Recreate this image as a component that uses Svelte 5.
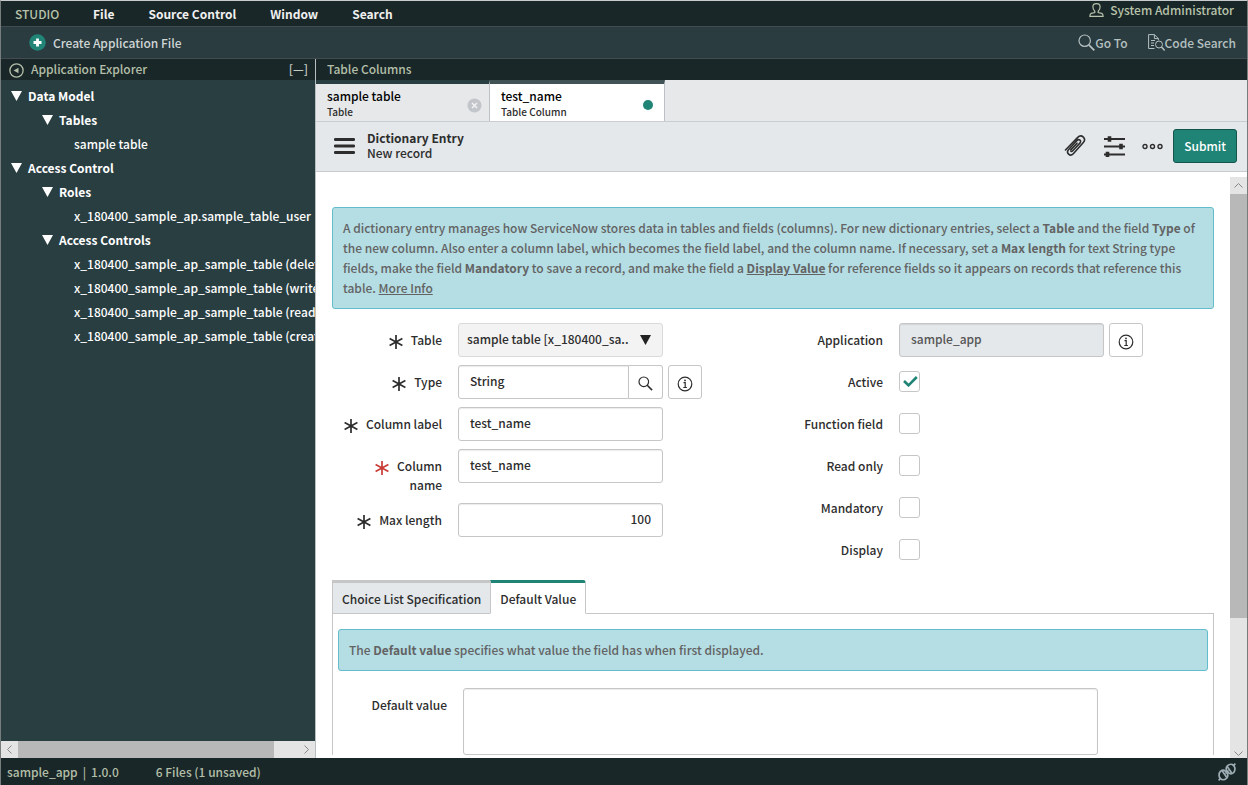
<script lang="ts">
  type Field = { id: string; label: string };

  const menus = ['File', 'Source Control', 'Window', 'Search'];

  // Application explorer tree, flattened
  const tree = [
    { label: 'Data Model', level: 0 },
    { label: 'Tables', level: 1 },
    { label: 'sample table', level: 2 },
    { label: 'Access Control', level: 0 },
    { label: 'Roles', level: 1 },
    { label: 'x_180400_sample_ap.sample_table_user', level: 2 },
    { label: 'Access Controls', level: 1 },
    { label: 'x_180400_sample_ap_sample_table (delete)', level: 2 },
    { label: 'x_180400_sample_ap_sample_table (write)', level: 2 },
    { label: 'x_180400_sample_ap_sample_table (read)', level: 2 },
    { label: 'x_180400_sample_ap_sample_table (create)', level: 2 }
  ];

  const flags: Field[] = [
    { id: 'active', label: 'Active' },
    { id: 'function_field', label: 'Function field' },
    { id: 'read_only', label: 'Read only' },
    { id: 'mandatory', label: 'Mandatory' },
    { id: 'display', label: 'Display' }
  ];

  // Record state
  let type = $state('String');
  let columnLabel = $state('test_name');
  let columnName = $state('test_name');
  let maxLength = $state('100');
  let defaultValue = $state('');
  let checked = $state<Record<string, boolean>>({ active: true });
  let section = $state('Default Value');
</script>

{#snippet mark(changed: boolean)}
  <svg class="mark" class:changed width="14" height="14" viewBox="0 0 14 14" fill="none" stroke="currentColor" stroke-width="1.7">
    <path d="M7 0v14M.6 3.6l12.8 6.8M13.4 3.6L.6 10.4" />
  </svg>
{/snippet}

{#snippet info()}
  <svg width="16" height="16" viewBox="0 0 16 16" fill="none" stroke="currentColor">
    <circle cx="8" cy="8" r="6.8" stroke-width="1.2" />
    <path d="M6.5 6.7h1.7v4.6M6.3 11.5h3.6" stroke-width="1.2" />
    <circle cx="8" cy="4.4" r=".9" fill="currentColor" stroke="none" />
  </svg>
{/snippet}

<div class="studio">
  <!-- Menu bar -->
  <header class="menubar">
    <span class="brand">STUDIO</span>
    <nav>
      {#each menus as menu}
        <button>{menu}</button>
      {/each}
    </nav>
    <button class="user">
      <svg width="15" height="14" viewBox="0 0 15 14" fill="none" stroke="currentColor" stroke-width="1.2">
        <path d="M5.8 8.2C4.3 6.8 3.8 5.2 3.9 3.6 4 1.7 5.5.7 7.5.7s3.5 1 3.600 2.900c.1 1.600-.4 3.200-1.900 4.600v1.300l3.600.9c.9.3 1.300 1 1.300 2.900H.9c0-1.900.4-2.600 1.300-2.900l3.600-.9z" />
      </svg>
      System Administrator
    </button>
  </header>

  <!-- Toolbar -->
  <div class="toolbar">
    <button class="create">
      <svg width="17" height="17" viewBox="0 0 17 17">
        <circle cx="8.5" cy="8.5" r="8.3" fill="#208577" />
        <path d="M8.5 4.5v8M4.5 8.5h8" stroke="#fff" stroke-width="2.8" />
      </svg>
      Create Application File
    </button>
    <button class="tool">
      <svg width="17" height="17" viewBox="0 0 17 17" fill="none" stroke="currentColor" stroke-width="1.2">
        <circle cx="6.7" cy="6.7" r="5.7" />
        <path d="M10.8 10.8l5.5 5.5" stroke-width="1.8" />
      </svg>
      Go To
    </button>
    <button class="tool">
      <svg width="17" height="17" viewBox="0 0 17 17" fill="none" stroke="currentColor">
        <path d="M6.5 14.5H.6V.6h5.8l4 4v1.6M6.4.6v4h4M3 6.5h4M3 9h3M3 11.5h3" />
        <circle cx="11" cy="10.5" r="3.5" />
        <path d="M13.5 13l3.2 3.5" stroke-width="1.5" />
      </svg>
      Code Search
    </button>
  </div>

  <div class="workspace">
    <!-- Application explorer -->
    <aside class="explorer">
      <div class="pane-title">
        <button class="collapse" aria-label="Collapse explorer">
          <svg width="15" height="15" viewBox="0 0 15 15" fill="none" stroke="currentColor">
            <circle cx="7.5" cy="7.5" r="6.6" stroke-width="1.3" />
            <path d="M9.5 4.7v5.6L4.5 7.5z" fill="currentColor" stroke="none" />
          </svg>
        </button>
        <span>Application Explorer</span>
        <button class="fold" aria-label="Collapse all">[—]</button>
      </div>
      <ul class="tree">
        {#each tree as node}
          <li class="level-{node.level}">
            {#if node.level < 2}
              <svg width="11" height="10" viewBox="0 0 11 10" fill="#fff"><path d="M0 0h11L5.5 10z" /></svg>
            {/if}
            {node.label}
          </li>
        {/each}
      </ul>
      <div class="scroll-x">
        <svg width="17" height="17" viewBox="0 0 17 17" fill="none" stroke="#888"><path d="M10.5 4.5l-4 4 4 4" /></svg>
        <div class="thumb"></div>
        <svg width="17" height="17" viewBox="0 0 17 17" fill="none" stroke="#888"><path d="M6.5 4.5l4 4-4 4" /></svg>
      </div>
    </aside>

    <main class="editor">
      <div class="pane-title">Table Columns</div>

      <!-- Open files -->
      <div class="file-tabs">
        <div class="file-tab">
          <span class="file-name">sample table</span>
          <span class="file-type">Table</span>
          <button class="close" aria-label="Close sample table">
            <svg width="15" height="15" viewBox="0 0 15 15">
              <circle cx="7.5" cy="7.5" r="7" fill="#c2c5ca" />
              <path d="M5 5l5 5M10 5l-5 5" stroke="#f2f2f4" stroke-width="1.5" />
            </svg>
          </button>
        </div>
        <div class="file-tab current">
          <span class="file-name">test_name</span>
          <span class="file-type">Table Column</span>
          <span class="unsaved"></span>
        </div>
      </div>

      <!-- Record header -->
      <div class="record-bar">
        <button aria-label="Menu">
          <svg width="21" height="16" viewBox="0 0 21 16" stroke="currentColor" stroke-width="2.8" stroke-linecap="round"><path d="M1.3 1.5h18.4M1.3 8h18.4M1.3 14.5h18.4" /></svg>
        </button>
        <h1>Dictionary Entry<small>New record</small></h1>
        <button aria-label="Attachments">
          <svg width="22" height="22" viewBox="0 0 22 22" fill="none" stroke="currentColor" stroke-width="1.6" stroke-linecap="round" stroke-linejoin="round">
            <path d="M1.5 15L13.5 2.600c2-2 4.300-1.900 5.800-.5s1.600 3.700-.2 5.700L9.300 18.700c-1.500 1.600-3.400 1.700-4.700.5s-1.300-3.100.1-4.700L13 5.500c1-1.100 2.200-1 3-.3s.8 1.900-.1 2.900L8.500 16c-.5.6-1.100.6-1.600.2" />
            <path d="M6.800 14.900L13 8.200" />
          </svg>
        </button>
        <button aria-label="Personalize form">
          <svg width="22" height="22" viewBox="0 0 22 22" fill="none" stroke="currentColor" stroke-width="1.8">
            <path d="M1 4h21M1 11.500h21M1 19.500h21" />
            <path d="M6.500 1.200v5.600M18 8.700v5.600M4.500 16.700v5.300" stroke-width="3.600" />
          </svg>
        </button>
        <button aria-label="More options">
          <svg class="dots" width="21" height="7" viewBox="0 0 21 7" fill="none" stroke="currentColor" stroke-width="1.4">
            <circle cx="3" cy="3.500" r="2" /><circle cx="10.500" cy="3.500" r="2" /><circle cx="18" cy="3.500" r="2" />
          </svg>
        </button>
        <button class="submit">Submit</button>
      </div>

      <div class="scroll-area">
        <form class="record">
          <div class="message">
            A dictionary entry manages how ServiceNow stores data in tables and fields (columns). For new dictionary
            entries, select a <b>Table</b> and the field <b>Type</b> of the new column. Also enter a column label, which
            becomes the field label, and the column name. If necessary, set a <b>Max length</b> for text String type
            fields, make the field <b>Mandatory</b> to save a record, and make the field a
            <a href="#display"><b>Display Value</b></a> for reference fields so it appears on records that reference
            this table. <a href="#more">More Info</a>
          </div>

          <div class="columns">
            <div class="column">
              <div class="row">
                <label for="table">{@render mark(false)}<span>Table</span></label>
                <div class="select">
                  <select id="table">
                    <option>sample table [x_180400_sa..</option>
                  </select>
                  <svg width="11" height="10" viewBox="0 0 11 10" fill="#222"><path d="M0 0h11L5.5 10z" /></svg>
                </div>
              </div>
              <div class="row">
                <label for="type">{@render mark(false)}<span>Type</span></label>
                <div class="lookup">
                  <input id="type" type="text" bind:value={type} />
                  <button type="button" aria-label="Look up type">
                    <svg width="15" height="15" viewBox="0 0 15 15" fill="none" stroke="currentColor" stroke-width="1.2">
                      <circle cx="5.8" cy="5.8" r="4.8" />
                      <path d="M9.2 9.2l4.900 4.900" stroke-width="1.6" />
                    </svg>
                  </button>
                </div>
                <button class="info" type="button" aria-label="Preview type">{@render info()}</button>
              </div>
              <div class="row">
                <label for="column_label">{@render mark(false)}<span>Column label</span></label>
                <input id="column_label" type="text" bind:value={columnLabel} />
              </div>
              <div class="row">
                <label for="column_name">{@render mark(true)}<span>Column<br />name</span></label>
                <input id="column_name" type="text" bind:value={columnName} />
              </div>
              <div class="row">
                <label for="max_length">{@render mark(false)}<span>Max length</span></label>
                <input id="max_length" class="number" type="text" bind:value={maxLength} />
              </div>
            </div>

            <div class="column">
              <div class="row">
                <label for="application"><span>Application</span></label>
                <input id="application" type="text" value="sample_app" readonly />
                <button class="info" type="button" aria-label="Preview application">{@render info()}</button>
              </div>
              {#each flags as flag}
                <div class="row">
                  <label for={flag.id}><span>{flag.label}</span></label>
                  <span class="check">
                    <input id={flag.id} type="checkbox" bind:checked={checked[flag.id]} />
                    {#if checked[flag.id]}
                      <svg width="15" height="11" viewBox="0 0 15 11" fill="none" stroke="#1f8476" stroke-width="2.6"><path d="M1 5l4.500 4.300L13.8 1" /></svg>
                    {/if}
                  </span>
                </div>
              {/each}
            </div>
          </div>

          <!-- Sections -->
          <div class="section-tabs">
            {#each ['Choice List Specification', 'Default Value'] as name}
              <button type="button" class:selected={section === name} onclick={() => (section = name)}>{name}</button>
            {/each}
          </div>
          <div class="section">
            <div class="message">The <b>Default value</b> specifies what value the field has when first displayed.</div>
            <div class="row">
              <label for="default_value"><span>Default value</span></label>
              <textarea id="default_value" bind:value={defaultValue}></textarea>
            </div>
          </div>
        </form>

        <div class="scroll-y">
          <svg width="17" height="17" viewBox="0 0 17 17" fill="none" stroke="#888"><path d="M4.5 10.5l4-4 4 4" /></svg>
          <div class="thumb"></div>
          <svg width="17" height="17" viewBox="0 0 17 17" fill="none" stroke="#888"><path d="M4.5 10.5l4 4 4-4" /></svg>
        </div>
      </div>
    </main>
  </div>

  <!-- Status bar -->
  <footer class="statusbar">
    <span class="version"><span>sample_app</span><span>|</span><span>1.0.0</span></span>
    <span>6 Files (1 unsaved)</span>
    <svg width="18" height="18" viewBox="0 0 18 18" fill="none" stroke="currentColor" stroke-width="1.7">
      <path d="M.6 17.4l2.400-2.400M17.4.6l-2.400 2.400" />
      <path d="M2.4 8.400c2.300-1.800 4.600-1 6 .6s2 4.200 0 6.400c-2 1.800-4.600 1.700-6 .2s-2.200-4.800 0-7.200z" />
      <path d="M15.600 9.600c-2.300 1.800-4.600 1-6-.6s-2-4.200 0-6.400c2-1.800 4.600-1.700 6-.2s2.200 4.800 0 7.200z" />
      <path d="M4.300 8l4.500 6.500M13.700 10L9.200 3.500M7.500 10.500l3-3" />
    </svg>
  </footer>
</div>

<style>
  :global(body) {
    font-family: 'Noto Sans CJK SC', 'Liberation Sans', sans-serif;
    font-size: 12px;
    font-weight: 500;
    line-height: 20px;
    color: #2d2d2d;
    background: #fff;
  }

  .studio,
  .studio * {
    box-sizing: border-box;
  }

  .studio {
    height: 100vh;
    display: flex;
    flex-direction: column;
    overflow: hidden;
    border: solid #777c7d;
    border-width: 1px 1px 0;
    border-top-color: #c9cccc;
  }

  button,
  input,
  select,
  textarea {
    font: inherit;
    color: inherit;
  }

  button {
    display: flex;
    align-items: center;
    padding: 0;
    background: none;
    border: 0;
    white-space: nowrap;
    cursor: pointer;
  }

  svg {
    display: block;
    flex: none;
  }

  /* Menu bar */
  .menubar {
    display: flex;
    align-items: center;
    height: 26px;
    padding: 0 13px 0 14px;
    background: #1a2728;
    border-bottom: 1px solid #414b50;
    color: #f0f0f0;
    flex: none;
  }

  .brand {
    width: 78px;
    color: #b8c3ab;
  }

  nav {
    display: flex;
    gap: 34px;
    flex: 1;
    font-weight: 700;
  }

  .user {
    gap: 6px;
    height: 20px;
    margin-bottom: 8px;
    color: #b8c3ab;
  }

  /* Toolbar */
  .toolbar {
    display: flex;
    align-items: center;
    gap: 20px;
    height: 32px;
    padding: 0 11px 0 28px;
    background: #2a3c40;
    border-bottom: 1px solid #414b50;
    color: #b5c0c0;
    flex: none;
  }

  .create {
    gap: 7px;
    margin-right: auto;
    color: #cfd5d5;
  }

  /* Panes */
  .workspace {
    display: flex;
    flex: 1;
    min-height: 0;
  }

  .pane-title {
    display: flex;
    align-items: center;
    height: 21px;
    padding: 0 11px 2px;
    background: #1a2728;
    color: #b3bfa9;
    flex: none;
  }

  .explorer {
    width: 315px;
    display: flex;
    flex-direction: column;
    background: #293e41;
    border-right: 1px solid #b9bec3;
    flex: none;
  }

  .explorer .pane-title {
    gap: 7px;
    padding: 0 7px 2px 8px;
  }

  .collapse {
    margin-top: 4px;
  }

  .fold {
    margin-left: auto;
    color: #c5cbc5;
  }

  .tree {
    flex: 1;
    margin: 0;
    padding: 4px 0;
    list-style: none;
    overflow: hidden;
    color: #fff;
  }

  .tree li {
    display: flex;
    align-items: center;
    gap: 6px;
    height: 24px;
    white-space: nowrap;
  }

  .tree .level-0 {
    padding-left: 10px;
    font-weight: 700;
  }

  .tree .level-1 {
    padding-left: 41px;
    font-weight: 700;
  }

  .tree .level-2 {
    padding-left: 73px;
  }

  .scroll-x {
    display: flex;
    height: 17px;
    background: #e4e4e4;
    flex: none;
  }

  .scroll-x .thumb {
    width: 256px;
    margin-right: auto;
    background: #b8b8b8;
  }

  .editor {
    display: flex;
    flex-direction: column;
    flex: 1;
    min-width: 0;
    background: #fff;
  }

  /* Open files */
  .file-tabs {
    display: flex;
    height: 42px;
    background: #e6e8ea;
    border-bottom: 1px solid #c9ccd1;
    flex: none;
  }

  .file-tab {
    position: relative;
    display: flex;
    flex-direction: column;
    width: 174px;
    padding: 3px 11px 0;
    border-top: 4px solid #293e41;
    border-right: 1px solid #bdc0c4;
  }

  .file-tab.current {
    width: 175px;
    background: #fff;
    border-top-color: #425356;
  }

  .file-name {
    line-height: 18px;
    color: #000;
  }

  .file-type {
    font-size: 10px;
    line-height: 13px;
  }

  .close,
  .unsaved {
    position: absolute;
    right: 7px;
    top: 14px;
  }

  .unsaved {
    right: 11px;
    top: 16px;
    width: 10px;
    height: 10px;
    border-radius: 50%;
    background: #1f8476;
  }

  /* Record header */
  .record-bar {
    display: flex;
    align-items: center;
    gap: 17px;
    height: 50px;
    padding: 0 10px 2px 18px;
    background: #e4e8eb;
    border-bottom: 1px solid #c8ccd0;
    flex: none;
  }

  h1 {
    display: flex;
    flex-direction: column;
    flex: 1;
    margin: 0 0 2px -5px;
    font-size: 12px;
    line-height: 15px;
    font-weight: 700;
  }

  h1 small {
    font-size: 12px;
    font-weight: 500;
  }

  .dots {
    margin-top: 2px;
  }

  .submit {
    margin-left: -7px;
    height: 34px;
    padding: 0 10px;
    background: #1f8476;
    border: 1px solid #12554c;
    border-radius: 3px;
    color: #fff;
  }

  /* Record */
  .scroll-area {
    display: flex;
    flex: 1;
    min-height: 0;
    overflow: hidden;
  }

  .record {
    flex: 1;
    min-width: 0;
    padding: 35px 16px 0;
  }

  .message {
    padding: 10px;
    background: #b4dde4;
    border: 1px solid #62bccb;
    border-radius: 3px;
    color: #636363;
  }

  .message a {
    color: inherit;
  }

  .columns {
    display: grid;
    grid-template-columns: 1fr 1fr;
    padding-top: 14px;
  }

  .column {
    display: flex;
    flex-direction: column;
    gap: 8px;
  }

  .row {
    display: flex;
    align-items: flex-start;
    min-height: 34px;
  }

  label {
    display: flex;
    justify-content: flex-end;
    gap: 8px;
    width: 110px;
    margin-right: 16px;
    padding: 7px 0 1px;
    text-align: right;
    line-height: 19px;
    white-space: nowrap;
    flex: none;
  }

  .mark {
    margin-top: 5px;
  }

  .mark.changed {
    color: #c83c36;
  }

  input[type='text'],
  select,
  textarea {
    width: 205px;
    height: 34px;
    margin: 0;
    padding: 0 11px 3px;
    background: #fff;
    border: 1px solid #c6c6c6;
    border-radius: 3px;
    outline: 0;
    box-shadow: inset 0 1px 1px rgba(0, 0, 0, 0.08);
  }

  input[type='text'][readonly] {
    background: #e4e8eb;
    color: #555;
  }

  .number {
    text-align: right;
  }

  .select {
    position: relative;
  }

  .select select {
    display: block;
    appearance: none;
    padding: 0 8px 2px;
    background: #f3f3f3;
    border-color: #dadada;
    box-shadow: none;
  }

  .select svg {
    position: absolute;
    right: 12px;
    top: 12px;
    pointer-events: none;
  }

  .lookup {
    display: flex;
    width: 205px;
  }

  .lookup input[type='text'] {
    flex: 1;
    min-width: 0;
    border-radius: 3px 0 0 3px;
  }

  .lookup button {
    width: 34px;
    height: 34px;
    justify-content: center;
    padding-top: 3px;
    border: 1px solid #c6c6c6;
    border-left: 0;
    border-radius: 0 3px 3px 0;
  }

  .info {
    width: 34px;
    height: 34px;
    margin-left: 5px;
    padding-top: 4px;
    justify-content: center;
    border: 1px solid #c6c6c6;
    border-radius: 3px;
  }

  .check {
    position: relative;
    width: 21px;
    height: 21px;
    margin-top: 6px;
  }

  .check input {
    display: block;
    appearance: none;
    width: 21px;
    height: 21px;
    margin: 0;
    background: #fff;
    border: 1px solid #c6c6c6;
    border-radius: 3px;
  }

  .check svg {
    position: absolute;
    left: 4px;
    top: 5px;
    pointer-events: none;
  }

  /* Sections */
  .section-tabs {
    display: flex;
    margin-top: 13px;
  }

  .section-tabs button {
    height: 34px;
    padding: 1px 9px 0;
    background: #e4e8eb;
    border: 1px solid #c6c6c6;
    border-top-width: 3px;
    border-right-width: 0;
    margin-bottom: -1px;
  }

  .section-tabs .selected {
    background: #fff;
    border-top-color: #1f8476;
    border-right-width: 1px;
    border-bottom-color: #fff;
    border-radius: 0 3px 0 0;
  }

  .section {
    padding: 15px 5px 0;
    border: 1px solid #c6c6c6;
    border-bottom: 0;
  }

  .section .row {
    padding-top: 17px;
  }

  .section label {
    width: 109px;
  }

  textarea {
    width: 73%;
    height: 67px;
    resize: none;
  }

  .scroll-y {
    display: flex;
    flex-direction: column;
    width: 17px;
    margin-top: 5px;
    background: #e4e4e4;
    flex: none;
  }

  .scroll-y .thumb {
    flex: 0 0 73%;
    margin-bottom: auto;
    background: #b8b8b8;
  }

  /* Status bar */
  .statusbar {
    display: flex;
    align-items: center;
    gap: 37px;
    height: 27px;
    padding: 0 11px 0 6px;
    background: #1a2728;
    color: #b3bfa9;
    flex: none;
  }

  .version {
    display: flex;
    gap: 5px;
  }

  .statusbar svg {
    margin-left: auto;
    color: #9eaeb5;
  }
</style>
